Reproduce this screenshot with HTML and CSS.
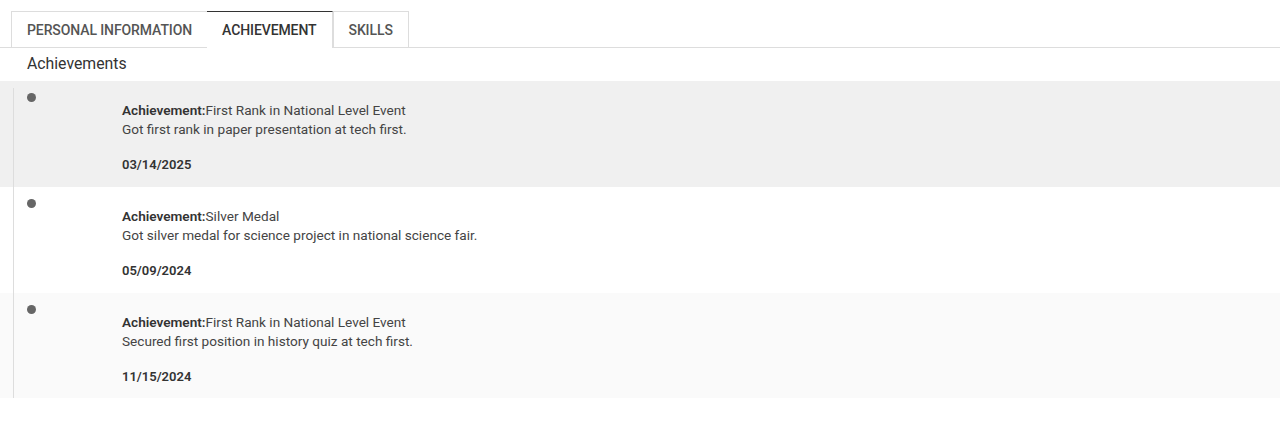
FILE: index.html
```html
<!doctype html>
<html lang="en">
<head>
<meta charset="utf-8">
<meta name="viewport" content="width=device-width, initial-scale=1">
<title>Achievements</title>
<link rel="stylesheet" href="styles.css">
</head>
<body>

<nav class="tabBar">
	<a class="tab">PERSONAL INFORMATION</a>
	<a class="tab tabActive">ACHIEVEMENT</a>
	<a class="tab">SKILLS</a>
</nav>

<main>

	<h3 class="secTitle">Achievements</h3>

	<ul class="timeline">

		<li class="item itemHilite">
			<span class="dot"></span>
			<div class="body">
				<p class="head"><b>Achievement:</b>First Rank in National Level Event</p>
				<p class="desc">Got first rank in paper presentation at tech first.</p>
				<p class="date">03/14/2025</p>
			</div>
		</li>

		<li class="item">
			<span class="dot"></span>
			<div class="body">
				<p class="head"><b>Achievement:</b>Silver Medal</p>
				<p class="desc">Got silver medal for science project in national science fair.</p>
				<p class="date">05/09/2024</p>
			</div>
		</li>

		<li class="item itemAlt">
			<span class="dot"></span>
			<div class="body">
				<p class="head"><b>Achievement:</b>First Rank in National Level Event</p>
				<p class="desc">Secured first position in history quiz at tech first.</p>
				<p class="date">11/15/2024</p>
			</div>
		</li>

	</ul>

</main>

</body>
</html>
```

FILE: styles.css
```css
* { box-sizing: border-box; }

:root { font: 13.6px "Roboto", "Liberation Sans", sans-serif; color: #444; }

body { margin: 0; background: #fff; }

p { margin: 0; }

.tabBar { display: flex; padding: 11px 0 0 11px; border-bottom: 1px solid #ddd; }

.tab { border: 1px solid #ddd; border-bottom: none; color: #555; font-size: 14px; font-weight: 500;
	height: 36px; line-height: 36px; letter-spacing: -0.1px; margin-bottom: -1px; padding: 0 15px; }
.tab + .tab { border-left: none; }
.tabActive { background: #fff; border-top: 1px solid #333; border-left: 1px solid #ddd; color: #333; height: 37px; }
.tabActive + .tab { border-left: 1px solid #ddd; }
.tab:first-child { border-right: none; }

.secTitle { color: #333; font-size: 15.8px; font-weight: 400; height: 33px; line-height: 32px; margin: 0; padding-left: 27px; }

.timeline { list-style: none; margin: 0; padding: 0; position: relative; }
.timeline::before { background: #ddd; bottom: 0; content: ""; left: 13px; position: absolute; top: 7px; width: 1px; }

.item { display: flex; height: 106px; padding-left: 27px; }
.itemHilite { background: #f0f0f0; }
.itemAlt { background: #fafafa; height: 105px; }

.dot { background: #666; border-radius: 50%; flex: none; height: 9px; margin-top: 12px; width: 9px; }

.body { line-height: 19px; margin-left: 86px; padding-top: 20px; }
.head b { color: #333; font-weight: 600; }
.date { color: #333; font-size: 13px; font-weight: 600; margin-top: 16px; }
```
